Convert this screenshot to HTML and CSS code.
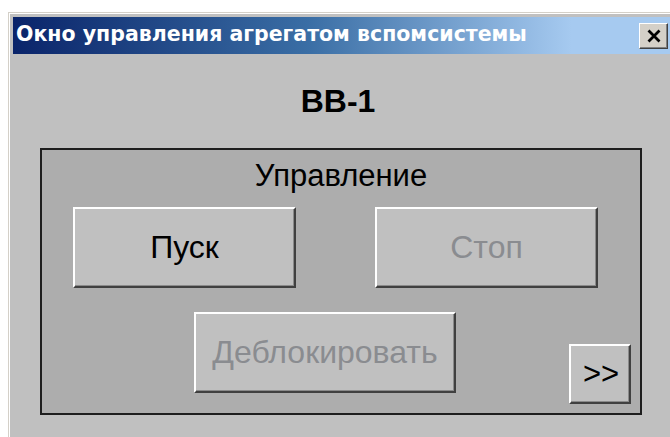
FILE: index.html
```html
<!DOCTYPE html>
<html lang="ru">
<head>
<meta charset="utf-8">
<title>Окно управления агрегатом вспомсистемы</title>
<link rel="stylesheet" href="styles.css">
</head>
<body>
<div class="window">
  <div class="titlebar">
    <span class="title">Окно управления агрегатом вспомсистемы</span>
    <button class="close" type="button" aria-label="Закрыть">
      <svg width="16" height="14" viewBox="0 0 16 14" aria-hidden="true">
        <path d="M2.5 1.5 L13.5 12.5 M13.5 1.5 L2.5 12.5" stroke="#000" stroke-width="2.8" fill="none"/>
      </svg>
    </button>
  </div>
  <div class="client">
    <div class="unit">ВВ-1</div>
    <div class="group">
      <div class="group-caption">Управление</div>
      <div class="row row-top">
        <button class="btn btn-main" type="button">Пуск</button>
        <button class="btn btn-main" type="button" disabled>Стоп</button>
      </div>
      <div class="row row-bottom">
        <button class="btn btn-unlock" type="button" disabled>Деблокировать</button>
        <button class="btn btn-more" type="button">&gt;&gt;</button>
      </div>
    </div>
  </div>
</div>
</body>
</html>
```
FILE: styles.css
```css
html, body {
  margin: 0;
  padding: 0;
  background: #ffffff;
}

body {
  width: 670px;
  height: 437px;
  overflow: hidden;
  font-family: "Liberation Sans", Arial, sans-serif;
}

/* classic dialog frame */
.window {
  margin: 12px 0 0 8px;
  height: 425px;
  box-sizing: border-box;
  border-top: 1px solid #d4d0c8;
  border-left: 1px solid #d4d0c8;
  box-shadow: inset 1px 1px 0 #ffffff;
  padding: 4px 0 0 4px;
  background: #c0c0c0;
}

.titlebar {
  height: 37px;
  box-sizing: border-box;
  display: flex;
  align-items: center;
  justify-content: space-between;
  padding: 0 2px 0 3px;
  background: linear-gradient(to right, #0a246a 0%, #3a6ea5 45%, #a6caf0 85%, #a6caf0 100%);
}

.title {
  color: #ffffff;
  font-family: "DejaVu Sans", Tahoma, sans-serif;
  font-weight: bold;
  font-size: 20.5px;
  line-height: 24px;
  margin-bottom: 3px;
  white-space: nowrap;
}

.close {
  width: 29px;
  height: 26px;
  margin: 0;
  padding: 0;
  display: flex;
  align-items: center;
  justify-content: center;
  background: #d4d0c8;
  border: 1px solid;
  border-color: #ffffff #404040 #404040 #ffffff;
  box-shadow: inset -1px -1px 0 #808080;
}

.client {
  padding: 0 0 0 27px;
}

.unit {
  width: 596px;
  padding: 29px 6px 0 0;
  text-align: center;
  font-size: 32px;
  font-weight: bold;
  line-height: 36px;
  color: #000000;
}

/* group frame */
.group {
  margin-top: 29px;
  width: 602px;
  height: 267px;
  box-sizing: border-box;
  border: 2px solid #1e1e1e;
  background: #adadad;
  display: flex;
  flex-direction: column;
}

.group-caption {
  padding-top: 8px;
  text-align: center;
  font-size: 31px;
  line-height: 36px;
  color: #000000;
}

.row {
  display: flex;
}

.row-top {
  margin-top: 13px;
  padding-left: 31px;
  gap: 79px;
}

.row-bottom {
  margin-top: 24px;
  padding-left: 152px;
  gap: 113px;
  align-items: flex-end;
}

.btn {
  margin: 0;
  padding: 0;
  box-sizing: border-box;
  background: #c0c0c0;
  border: 2px solid;
  border-color: #ffffff #404040 #404040 #ffffff;
  box-shadow: inset -1px -1px 0 #8a8a8a;
  font-family: "Liberation Sans", Arial, sans-serif;
  font-size: 32px;
  color: #000000;
}

.btn:disabled {
  color: #8a8c90;
}

.btn-main {
  width: 223px;
  height: 81px;
}

.btn-unlock {
  width: 262px;
  height: 81px;
  margin-bottom: 11px;
}

.btn-more {
  width: 62px;
  height: 60px;
  font-size: 31px;
  padding-left: 2px;
}
```
